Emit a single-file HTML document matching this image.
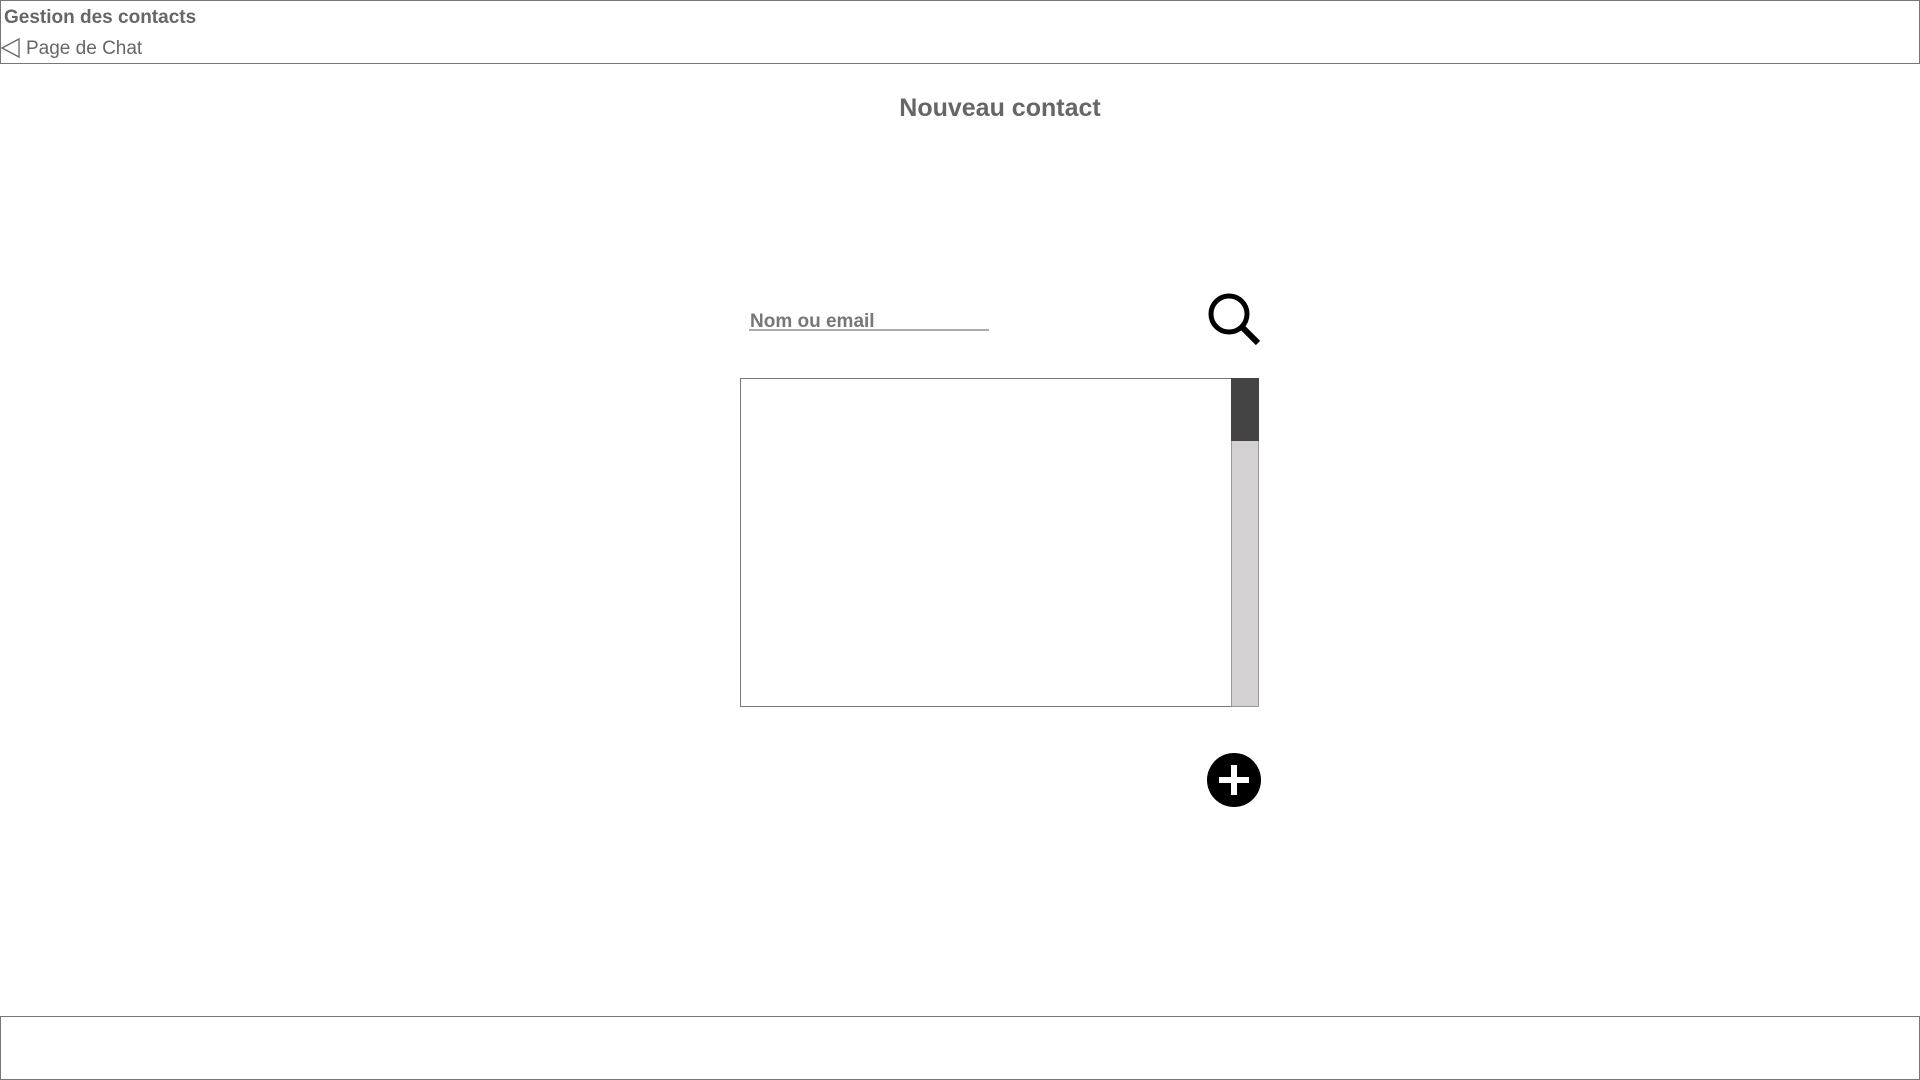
<!DOCTYPE html>
<html><head><meta charset="utf-8"><style>
body{margin:0;width:1920px;height:1080px;background:#fff;position:relative;overflow:hidden;font-family:"Liberation Sans",sans-serif;}
.abs{position:absolute;}
</style></head><body>
<div class="abs" style="left:0;top:0;width:1918px;height:62px;border:1px solid #777;"></div>
<div class="abs" style="left:4px;top:7px;font-size:19px;font-weight:bold;color:#666;">Gestion des contacts</div>
<svg class="abs" style="left:0;top:37px" width="22" height="22"><path d="M19 2 L2 11 L19 20 Z" fill="none" stroke="#666" stroke-width="1.3"/></svg>
<div class="abs" style="left:26px;top:38px;font-size:19px;color:#666;">Page de Chat</div>
<div class="abs" style="left:0;top:94px;width:2000px;text-align:center;font-size:25px;font-weight:bold;color:#666;">Nouveau contact</div>
<div class="abs" style="left:750px;top:311px;font-size:19px;font-weight:bold;color:#777;">Nom ou email</div>
<div class="abs" style="left:749px;top:329px;width:240px;height:2px;background:#aaa;"></div>
<svg class="abs" style="left:1203px;top:288px" width="60" height="60"><circle cx="26" cy="26" r="18" fill="none" stroke="#000" stroke-width="5"/><line x1="39" y1="39" x2="55" y2="55" stroke="#000" stroke-width="6"/></svg>
<div class="abs" style="left:740px;top:378px;width:490px;height:327px;border:1px solid #777;"></div>
<div class="abs" style="left:1231px;top:378px;width:26px;height:327px;background:#d3d1d1;border:1px solid #999;"></div>
<div class="abs" style="left:1231px;top:378px;width:28px;height:63px;background:#444;"></div>
<svg class="abs" style="left:1206px;top:752px" width="56" height="56"><circle cx="28" cy="28" r="27" fill="#000"/><rect x="13" y="25" width="30" height="6" fill="#fff"/><rect x="25" y="13" width="6" height="30" fill="#fff"/></svg>
<div class="abs" style="left:0;top:1016px;width:1918px;height:62px;border:1px solid #777;"></div>
</body></html>
